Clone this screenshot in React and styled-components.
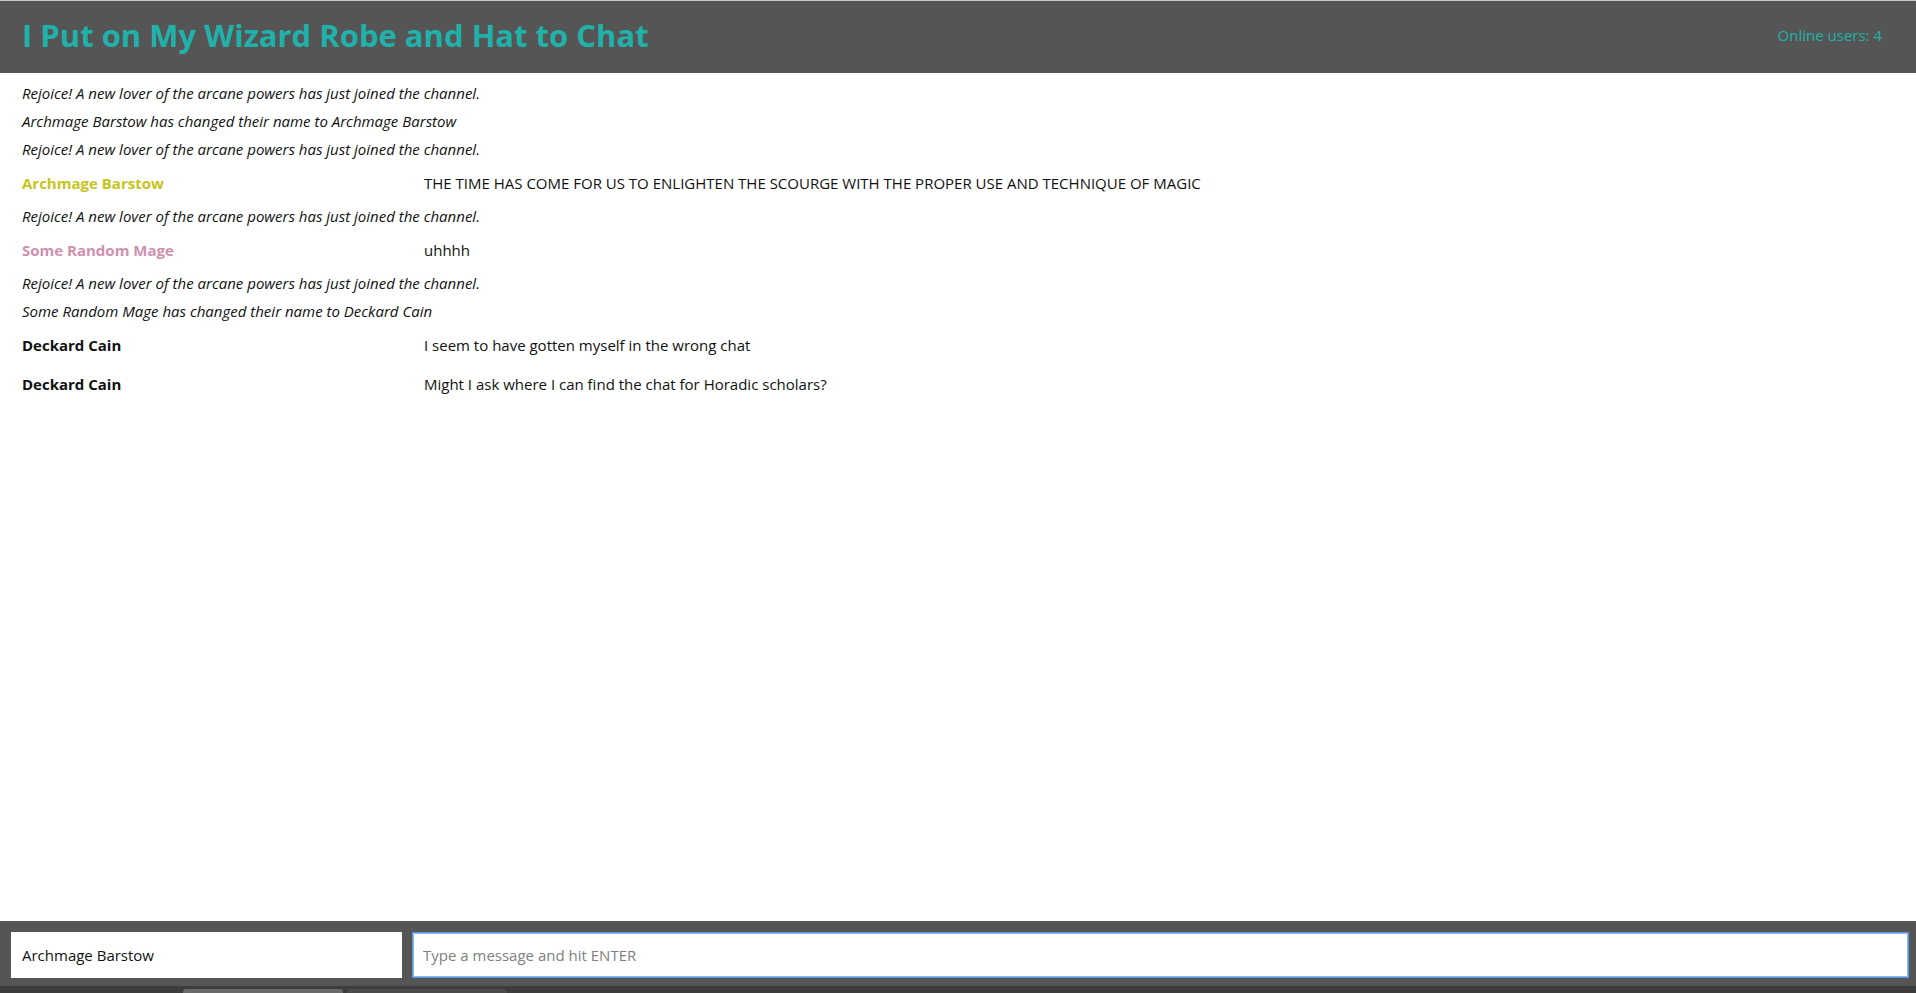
import React from 'react';
import styled, { createGlobalStyle } from 'styled-components';

const GlobalStyle = createGlobalStyle`
  html, body {
    margin: 0;
    padding: 0;
    height: 100%;
    background: #fff;
    font-family: "Open Sans", "Liberation Sans", sans-serif;
  }
  #root {
    height: 100%;
  }
`;

const S = {
  Page: styled.div`
    display: flex;
    flex-direction: column;
    height: 100vh;
    overflow: hidden;
  `,
  Header: styled.header`
    flex: 0 0 auto;
    box-sizing: border-box;
    height: 73px;
    border-top: 1px solid #c8c8c8;
    background: #555555;
    display: flex;
    align-items: center;
    justify-content: space-between;
    padding: 0 34px 5px 22px;
  `,
  Title: styled.h1`
    margin: 0;
    font-size: 31px;
    font-weight: 700;
    color: #20b2aa;
  `,
  Online: styled.div`
    font-size: 15px;
    color: #20b2aa;
  `,
  Messages: styled.div`
    flex: 1 1 auto;
    padding: 6px 22px 0;
    overflow: hidden;
  `,
  Notice: styled.div`
    height: 28px;
    line-height: 28px;
    font-size: 15px;
    font-style: italic;
    color: #111;
  `,
  Row: styled.div`
    display: grid;
    grid-template-columns: 402px 1fr;
    height: 39px;
    align-items: center;
    font-size: 15px;
  `,
  Name: styled.span`
    font-weight: 700;
    color: ${(p) => p.$color || '#111'};
  `,
  Text: styled.span`
    color: #111;
  `,
  Bar: styled.form`
    flex: 0 0 auto;
    display: flex;
    gap: 10px;
    padding: 11px 7px 8px 11px;
    background: #555555;
  `,
  Input: styled.input`
    box-sizing: border-box;
    height: 46px;
    border: 1px solid #fff;
    outline: none;
    padding: 0 10px;
    font-family: "Open Sans", "Liberation Sans", sans-serif;
    font-size: 15px;
    color: #111;
    background: #fff;
    flex: ${(p) => (p.$grow ? '1 1 auto' : '0 0 391px')};
    width: ${(p) => (p.$grow ? 'auto' : '391px')};
    caret-color: #000;

    &::placeholder {
      color: #808080;
    }

    &:focus {
      border-color: #5b9ae6;
      box-shadow: inset 0 0 0 1px #8ab8f0;
    }
  `,
  Strip: styled.div`
    flex: 0 0 7px;
    background: #3d3d3d;
    display: flex;
    align-items: flex-end;
    gap: 4px;
    padding-left: 183px;
  `,
  Tab: styled.div`
    width: 160px;
    height: 4px;
    border-radius: 3px 3px 0 0;
    background: ${(p) => (p.$active ? '#6a6a6a' : '#4a4a4a')};
  `,
};

const feed = [
  { sys: 'Rejoice! A new lover of the arcane powers has just joined the channel.' },
  { sys: 'Archmage Barstow has changed their name to Archmage Barstow' },
  { sys: 'Rejoice! A new lover of the arcane powers has just joined the channel.' },
  { name: 'Archmage Barstow', color: '#c6c41c', text: 'THE TIME HAS COME FOR US TO ENLIGHTEN THE SCOURGE WITH THE PROPER USE AND TECHNIQUE OF MAGIC' },
  { sys: 'Rejoice! A new lover of the arcane powers has just joined the channel.' },
  { name: 'Some Random Mage', color: '#cf90b0', text: 'uhhhh' },
  { sys: 'Rejoice! A new lover of the arcane powers has just joined the channel.' },
  { sys: 'Some Random Mage has changed their name to Deckard Cain' },
  { name: 'Deckard Cain', text: 'I seem to have gotten myself in the wrong chat' },
  { name: 'Deckard Cain', text: 'Might I ask where I can find the chat for Horadic scholars?' },
];

export default function App() {
  return (
    <>
      <GlobalStyle />
      <S.Page>
        <S.Header>
          <S.Title>I Put on My Wizard Robe and Hat to Chat</S.Title>
          <S.Online>Online users: 4</S.Online>
        </S.Header>
        <S.Messages>
          {feed.map((m, i) =>
            m.sys ? (
              <S.Notice key={i}>{m.sys}</S.Notice>
            ) : (
              <S.Row key={i}>
                <S.Name $color={m.color}>{m.name}</S.Name>
                <S.Text>{m.text}</S.Text>
              </S.Row>
            )
          )}
        </S.Messages>
        <S.Bar onSubmit={(e) => e.preventDefault()}>
          <S.Input defaultValue="Archmage Barstow" />
          <S.Input $grow autoFocus placeholder="Type a message and hit ENTER" />
        </S.Bar>
        <S.Strip>
          <S.Tab $active />
          <S.Tab />
        </S.Strip>
      </S.Page>
    </>
  );
}
